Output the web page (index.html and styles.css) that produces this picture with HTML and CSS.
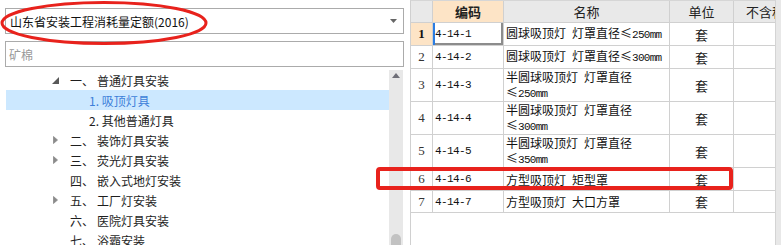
FILE: index.html
```html
<html>
    <head>
        <title>定额库</title>
        <link rel="stylesheet" href="styles.css">
    </head>
    <body>
        <div class="app">
            <div class="sectionLeft">
                <div class="combo">
                    <span>山东省安装工程消耗量定额(2016)</span>
                    <svg class="dropArrow" width="7" height="4" viewBox="0 0 7 4"><path d="M0 0H7L3.5 4Z" fill="#666"/></svg>
                </div>
                <div class="search">矿棉</div>
                <div class="tree">
                    <div class="nodes">
                        <div class="node">
                            <span class="tw"><svg width="7" height="7" viewBox="0 0 7 7"><path d="M7 0V7H0Z" fill="#595959"/></svg></span>
                            <span class="num">一、</span><span>普通灯具安装</span>
                        </div>
                        <div class="node child selected">1. 吸顶灯具</div>
                        <div class="node child">2. 其他普通灯具</div>
                        <div class="node">
                            <span class="tw"><svg width="5" height="8" viewBox="0 0 5 8"><path d="M0.5 0.5L4.5 4L0.5 7.5Z" fill="#8a8a8a" stroke="#8a8a8a" stroke-width="0.8"/></svg></span>
                            <span class="num">二、</span><span>装饰灯具安装</span>
                        </div>
                        <div class="node">
                            <span class="tw"><svg width="5" height="8" viewBox="0 0 5 8"><path d="M0.5 0.5L4.5 4L0.5 7.5Z" fill="#8a8a8a" stroke="#8a8a8a" stroke-width="0.8"/></svg></span>
                            <span class="num">三、</span><span>荧光灯具安装</span>
                        </div>
                        <div class="node">
                            <span class="tw"></span>
                            <span class="num">四、</span><span>嵌入式地灯安装</span>
                        </div>
                        <div class="node">
                            <span class="tw"><svg width="5" height="8" viewBox="0 0 5 8"><path d="M0.5 0.5L4.5 4L0.5 7.5Z" fill="#8a8a8a" stroke="#8a8a8a" stroke-width="0.8"/></svg></span>
                            <span class="num">五、</span><span>工厂灯安装</span>
                        </div>
                        <div class="node">
                            <span class="tw"></span>
                            <span class="num">六、</span><span>医院灯具安装</span>
                        </div>
                        <div class="node">
                            <span class="tw"></span>
                            <span class="num">七、</span><span>浴霸安装</span>
                        </div>
                    </div>
                    <div class="vscroll">
                        <div class="upBtn"><svg width="8" height="5" viewBox="0 0 8 5"><path d="M0 5H8L4 0Z" fill="#6f6f78"/></svg></div>
                        <div class="thumb"></div>
                    </div>
                </div>
            </div>

            <div class="sectionRight">
                <div class="grid">
                    <div class="hd"></div>
                    <div class="hd hdActive">编码</div>
                    <div class="hd">名称</div>
                    <div class="hd">单位</div>
                    <div class="hd hdLast">不含税</div>

                    <div class="rn rnActive">1</div>
                    <div class="code focused">4-14-1</div>
                    <div class="name"><span>圆球吸顶灯&ensp;灯罩直径≤<span class="mm">250mm</span></span></div>
                    <div class="unit">套</div>
                    <div class="cell"></div>

                    <div class="rn">2</div>
                    <div class="code">4-14-2</div>
                    <div class="name"><span>圆球吸顶灯&ensp;灯罩直径≤<span class="mm">300mm</span></span></div>
                    <div class="unit">套</div>
                    <div class="cell"></div>

                    <div class="rn">3</div>
                    <div class="code">4-14-3</div>
                    <div class="name"><span>半圆球吸顶灯&ensp;灯罩直径<br>≤<span class="mm">250mm</span></span></div>
                    <div class="unit">套</div>
                    <div class="cell"></div>

                    <div class="rn">4</div>
                    <div class="code">4-14-4</div>
                    <div class="name"><span>半圆球吸顶灯&ensp;灯罩直径<br>≤<span class="mm">300mm</span></span></div>
                    <div class="unit">套</div>
                    <div class="cell"></div>

                    <div class="rn">5</div>
                    <div class="code">4-14-5</div>
                    <div class="name"><span>半圆球吸顶灯&ensp;灯罩直径<br>≤<span class="mm">350mm</span></span></div>
                    <div class="unit">套</div>
                    <div class="cell"></div>

                    <div class="rn">6</div>
                    <div class="code">4-14-6</div>
                    <div class="name"><span>方型吸顶灯&ensp;矩型罩</span></div>
                    <div class="unit">套</div>
                    <div class="cell"></div>

                    <div class="rn">7</div>
                    <div class="code">4-14-7</div>
                    <div class="name"><span>方型吸顶灯&ensp;大口方罩</span></div>
                    <div class="unit">套</div>
                    <div class="cell"></div>
                </div>
                <div class="rscroll"></div>
            </div>

            <!-- red annotation marks -->
            <svg class="markEllipse" width="212" height="48" viewBox="0 0 212 48">
                <ellipse cx="104" cy="23" rx="102" ry="20.5" fill="none" stroke="#e8221c" stroke-width="3"/>
            </svg>
            <div class="markRect"></div>
        </div>
    </body>
</html>
```

FILE: styles.css
```css
body {
    margin: 0;
    font-family: "Noto Sans CJK SC", "Noto Sans", sans-serif;
    font-size: 12px;
    color: #1a1a1a;
    background: #fff;
}

.app {
    position: relative;
    display: flex;
    width: 781px;
    height: 245px;
    overflow: hidden;
}

/* left side: library picker + chapter tree */
.sectionLeft {
    width: 410px;
    flex-shrink: 0;
    padding: 8px 0 0 5px;
    box-sizing: border-box;
}

.combo, .search {
    width: 399px;
    height: 26px;
    border: 1px solid #ababab;
    box-sizing: border-box;
    display: flex;
    align-items: center;
    padding: 0 4px;
}

.combo {
    justify-content: space-between;
}

.combo span {
    font-size: 12px;
    color: #111;
}

.dropArrow {
    margin-right: 2px;
}

.search {
    margin-top: 7px;
    color: #9a9a9a;
    padding-left: 3px;
}

.tree {
    display: flex;
    margin: 3px 0 0 1px;
    height: 180px;
}

.nodes {
    width: 383px;
}

.node {
    height: 20px;
    display: flex;
    align-items: center;
    padding-left: 45px;
    color: #1e1e1e;
}

.node .tw {
    width: 8px;
    height: 20px;
    display: flex;
    align-items: center;
    justify-content: center;
    margin-right: 11px;
}

.node .num {
    width: 27px;
}

.node.child {
    padding-left: 83px;
}

.node.selected {
    background: #cce8ff;
    color: #3d7fd9;
}

.vscroll {
    width: 14px;
    background: #e8e8e8;
    display: flex;
    flex-direction: column;
    justify-content: space-between;
    align-items: center;
}

.upBtn {
    height: 10px;
    display: flex;
    align-items: center;
    justify-content: center;
    width: 14px;
}

.thumb {
    width: 10px;
    height: 16px;
    border-radius: 5px 5px 0 0;
    background: #c2c2c2;
}

/* right side: quota item grid */
.sectionRight {
    flex: 1;
    display: flex;
}

.grid {
    width: 365px;
    height: 245px;
    border-left: 1px solid #d0d0d0;
    border-top: 1px solid #d6d6d6;
    box-sizing: border-box;
    display: grid;
    grid-template-columns: 22px 71px 166px 64px 42px;
    grid-template-rows: 22px 23px 23px 33px 33px 33px 23px 22px;
    align-content: start;
    overflow: hidden;
}

.grid > div {
    border-right: 1px solid #d0d0d0;
    border-bottom: 1px solid #d0d0d0;
    box-sizing: border-box;
    display: flex;
    align-items: center;
    white-space: nowrap;
    overflow: hidden;
}

.hd {
    background: #e9e9e9;
    justify-content: center;
    font-size: 13px;
    color: #222;
}

.hdActive {
    background: #fde4c6;
    font-weight: bold;
}

.hdLast {
    justify-content: flex-start !important;
    padding-left: 12px;
}

.rn {
    justify-content: center;
    font-family: "Liberation Serif", serif;
    font-size: 13px;
    color: #333;
}

.rnActive {
    background: #fde4c6;
    font-weight: bold;
    color: #111;
}

.code {
    padding-left: 2px;
    font-family: "Liberation Mono", monospace;
    font-size: 11px;
    letter-spacing: -0.6px;
    color: #111;
}

.code.focused {
    box-shadow: inset 2px 0 0 #2b7de3, inset -2px -2px 0 #8c8c8c;
}

.name {
    padding-left: 2px;
    line-height: 15px;
    font-size: 12px;
    color: #111;
}

.name .mm {
    font-family: "Liberation Mono", monospace;
    font-size: 11px;
    letter-spacing: -0.7px;
}

.unit {
    justify-content: center;
    font-size: 13px;
}

.rscroll {
    flex: 1;
    background: #e8e8e8;
    border-left: 1px solid #d4d4d4;
}

/* red markers drawn over the screenshot */
.markEllipse {
    position: absolute;
    left: 0;
    top: 0;
}

.markRect {
    position: absolute;
    left: 376px;
    top: 167px;
    width: 357px;
    height: 23px;
    box-sizing: border-box;
    border: 4px solid #e8221c;
    border-radius: 4px;
}
```
